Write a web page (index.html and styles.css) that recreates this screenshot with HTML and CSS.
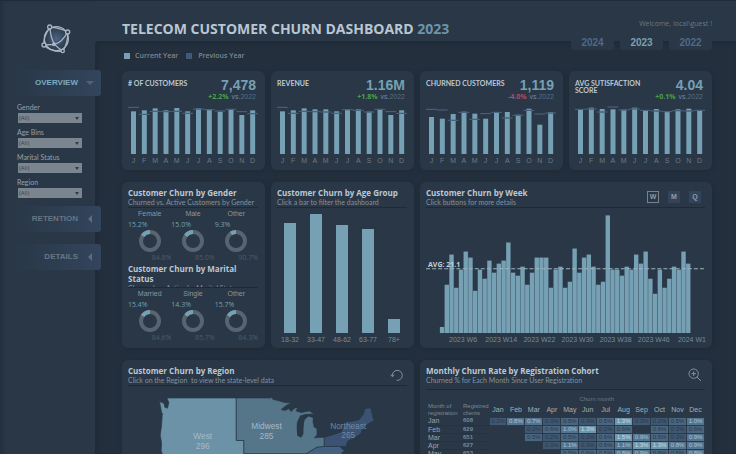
FILE: index.html
```html
<!DOCTYPE html>
<html lang="en">
<head>
<meta charset="utf-8">
<title>Telecom Customer Churn Dashboard</title>
<link rel="stylesheet" href="styles.css">
</head>
<body>
<div class="app">
  <aside class="sidebar">
    <svg class="logo" viewBox="120 62 96 99" aria-hidden="true">
      <defs><radialGradient id="globe"><stop offset="0" stop-color="#4b6282"/><stop offset="1" stop-color="#2a3949"/></radialGradient></defs>
      <circle cx="169" cy="112" r="36" fill="url(#globe)"/>
      <g fill="none" stroke="#a9b5c1" stroke-width="4">
        <circle cx="169" cy="112" r="36"/>
        <path d="M150 78Q151 110 164 129Q174 140 186 148M203 92Q186 124 164 129L132 131M150 78Q178 78 203 92Q205 124 188 150Q150 152 132 131Q129 106 150 78"/>
      </g>
      <g fill="#2a3949" stroke="#a9b5c1" stroke-width="4"><circle cx="149" cy="77" r="6"/><circle cx="203" cy="92" r="6"/><circle cx="132" cy="131" r="6"/><circle cx="188" cy="149" r="5"/></g>
      <circle cx="162" cy="129" r="6" fill="#a9b5c1"/>
    </svg>
    <nav class="menu">
      <button class="tab tab-active">OVERVIEW<svg viewBox="0 0 8 8"><path d="M0 2h8L4 6z"/></svg></button>
      <div class="filters">
        <label for="gender">Gender</label>
        <div class="pick"><select id="gender"><option>(All)</option></select></div>
        <label for="age">Age Bins</label>
        <div class="pick"><select id="age"><option>(All)</option></select></div>
        <label for="marital">Marital Status</label>
        <div class="pick"><select id="marital"><option>(All)</option></select></div>
        <label for="region">Region</label>
        <div class="pick"><select id="region"><option>(All)</option></select></div>
      </div>
      <button class="tab">RETENTION<svg viewBox="0 0 8 8"><path d="M6 0v8L2 4z"/></svg></button>
      <button class="tab">DETAILS<svg viewBox="0 0 8 8"><path d="M6 0v8L2 4z"/></svg></button>
    </nav>
  </aside>

  <div class="page">
    <header class="topbar">
      <h1>TELECOM CUSTOMER CHURN DASHBOARD <span>2023</span></h1>
      <div class="account">
        <p>Welcome, local\guest !</p>
        <nav class="years"><a href="#y2024">2024</a><a href="#y2023" class="current">2023</a><a href="#y2022">2022</a></nav>
      </div>
    </header>

    <main>
      <div class="legend"><span class="key">Current Year</span><span class="key key-prev">Previous Year</span></div>
      <div class="grid">
        <section class="card kpi">
          <div class="kpi-head"><h2># OF CUSTOMERS</h2><div class="figures"><strong>7,478</strong><p><b class="up">+2.2%</b> vs.<span>2022</span></p></div></div>
          <div class="months" data-kpi="customers"></div>
        </section>
        <section class="card kpi">
          <div class="kpi-head"><h2>REVENUE</h2><div class="figures"><strong>1.16M</strong><p><b class="up">+1.8%</b> vs.<span>2022</span></p></div></div>
          <div class="months" data-kpi="revenue"></div>
        </section>
        <section class="card kpi">
          <div class="kpi-head"><h2>CHURNED CUSTOMERS</h2><div class="figures"><strong>1,119</strong><p><b class="down">-4.0%</b> vs.<span>2022</span></p></div></div>
          <div class="months" data-kpi="churned"></div>
        </section>
        <section class="card kpi">
          <div class="kpi-head"><h2>AVG SUTISFACTION SCORE</h2><div class="figures"><strong>4.04</strong><p><b class="up">+0.1%</b> vs.<span>2022</span></p></div></div>
          <div class="months" data-kpi="score"></div>
        </section>

        <section class="card">
          <div class="head"><h2>Customer Churn by Gender</h2><p>Churned vs. Active Customers by Gender</p></div>
          <div class="donuts" data-donuts="gender"></div>
          <div class="head head-clipped"><h2>Customer Churn by Marital Status</h2><p>Churned vs. Active by Marital Status</p></div>
          <div class="donuts" data-donuts="marital"></div>
        </section>

        <section class="card">
          <div class="head"><h2>Customer Churn by Age Group</h2><p>Click a bar to filter the dashboard</p></div>
          <div class="ages" id="ages"></div>
        </section>

        <section class="card wide">
          <div class="head head-row">
            <div><h2>Customer Churn by Week</h2><p>Click buttons for more details</p></div>
            <div class="periods"><button class="on">W</button><button>M</button><button>Q</button></div>
          </div>
          <div class="weeks">
            <svg id="weeks" viewBox="0 0 825 375" preserveAspectRatio="none"></svg>
            <span class="avg">AVG: 21.1</span>
          </div>
          <div class="week-axis"><span>2023 W6</span><span>2023 W14</span><span>2023 W22</span><span>2023 W30</span><span>2023 W38</span><span>2023 W46</span><span>2024 W1</span></div>
        </section>

        <section class="card wide">
          <div class="head head-row">
            <div><h2>Customer Churn by Region</h2><p>Click on the Region&nbsp; to view the state-level data</p></div>
            <button class="icon" aria-label="Reset"><svg viewBox="0 0 42 42"><path d="M7 24A15 15 0 1 1 20 37M2 20L7 26L13 21"/></svg></button>
          </div>
          <svg class="map" viewBox="39 96 840 330">
            <path class="south" d="M388 300H575L608 280L630 278H676L690 290L680 302L700 330L640 400L650 426H560L400 420z"/>
            <path class="west" d="M134 143L147 148L150 160L158 163L162 146L156 132H365V260H388V420H200L150 330L139 290L140 267L136 245L140 215L142 182L144 180L140 176z"/>
            <path class="midwest" d="M365 132H470L471 127L475 136L490 140L512 146L530 147L515 155L500 167L512 170L523 164L530 173L541 162L550 162L545 171L560 176L585 171L600 180L575 182L558 186L549 205L548 225L550 245L560 250L566 240L564 215L570 198L582 186L596 190L606 205L598 218L608 225V243L600 252L630 250V278L608 280L575 300H388V260H365z"/>
            <path class="northeast" d="M630 250L650 245L682 234L688 218L698 205L735 198L748 180L752 165L758 163L770 162L776 190L780 200L765 208L745 222L740 240L720 252L700 262L695 278H630z"/>
            <path class="lake" d="M558 186L575 180L600 181L606 188L607 205L600 220L595 205L596 192L582 186L570 194L566 240L560 250L550 246L548 215z"/>
            <g class="map-text"><text x="264" y="255">West</text><text x="264" y="285">296</text><text x="456" y="227">Midwest</text><text x="456" y="257">285</text><g class="dim"><text x="702" y="225">Northeast</text><text x="702" y="254">265</text></g></g>
          </svg>
        </section>

        <section class="card wide">
          <div class="head head-row head-cohort">
            <div><h2>Monthly Churn Rate by Registration Cohort</h2><p>Churned % for Each Month Since User Registration</p></div>
            <button class="icon" aria-label="Zoom"><svg viewBox="0 0 42 42"><circle cx="17" cy="17" r="14"/><path d="M27 27L39 39M10 17H24M17 10V24"/></svg></button>
          </div>
          <table class="cohort">
            <colgroup><col class="col-month"><col class="col-clients"><col span="12"></colgroup>
            <thead>
              <tr class="over"><td colspan="2"></td><th colspan="12">Churn month</th></tr>
              <tr id="cohort-months"><th class="dim">Month of registration</th><th class="dim">Registred clients</th></tr>
            </thead>
            <tbody id="cohort-rows"></tbody>
          </table>
        </section>
      </div>
    </main>
  </div>
</div>
<script src="charts.js"></script>
</body>
</html>
```
FILE: styles.css
```css
* { box-sizing: border-box; }
body {
  margin: 0;
  font: 7px/9px "Open Sans", "Noto Sans", sans-serif;
  color: #7d8995;
  background: #232f3d;
}
h1, h2, p { margin: 0; font-size: inherit; }
button { font: inherit; color: inherit; border: 0; padding: 0; background: none; }
svg { display: block; }

.app {
  display: grid;
  grid-template-columns: 95px 1fr;
  height: 100vh;
  overflow: hidden;
  background: #293746;
  border-top: 1px solid #202b38;
}

/* Sidebar */
.sidebar { padding-top: 21px; box-shadow: inset 3px 0 3px #243140; }
.logo { width: 32px; height: 33px; margin: 0 auto 15px 40px; }
.menu { display: flex; flex-direction: column; position: relative; z-index: 1; }
.tab {
  display: flex;
  justify-content: flex-end;
  align-items: center;
  gap: 8px;
  height: 26px;
  margin: 0 -6px 12px 12px;
  padding-right: 7px;
  border-radius: 3px;
  background: linear-gradient(90deg, #293746, #33455d);
  font: bold 8px/10px "Liberation Sans", sans-serif;
  color: #667686;
}
.tab svg { width: 8px; height: 8px; fill: #5b6c85; }
.tab-active { margin-bottom: 6px; color: #7cabc0; }
.tab-active svg { fill: #50627b; }

.filters { display: flex; flex-direction: column; padding: 0 13px 4px 17px; }
.filters label { height: 11px; font: 7px/11px Lato, "Open Sans", sans-serif; color: #95a1ac; }
.pick { position: relative; margin: 0 0 4px 1px; height: 10px; }
.pick select {
  appearance: none;
  display: block;
  width: 100%;
  height: 10px;
  padding: 0 0 0 1px;
  border: 0;
  border-radius: 0;
  background: #7b858f;
  color: #384350;
  font: 6px/10px "Open Sans", sans-serif;
}
.pick::after {
  content: "";
  position: absolute;
  right: 3px;
  top: 4px;
  border: 2px solid transparent;
  border-top: 3px solid #313c48;
}

/* Header */
.page { display: flex; flex-direction: column; min-width: 0; }
.topbar {
  display: flex;
  justify-content: space-between;
  height: 40px;
  padding: 0 24px 0 27px;
  background: #293746;
}
h1 { padding-top: 18px; font-size: 14px; font-weight: bold; line-height: 20px; color: #b9c6d2; white-space: nowrap; }
h1 span { color: #6e94a9; }
.account { display: flex; flex-direction: column; align-items: flex-end; padding-top: 18px; }
.account p { color: #6d7882; }
.years { display: flex; gap: 6px; margin-top: 7px; position: relative; }
.years a {
  width: 43px;
  height: 15px;
  border-radius: 0 0 3px 3px;
  background: #293746;
  font: bold 10px/15px "Liberation Sans", sans-serif;
  text-align: center;
  text-decoration: none;
  color: #4f698c;
}
.years .current { color: #7c9fb2; }

/* Main area */
main {
  flex: 1;
  padding: 9px 24px 0 27px;
  border-radius: 4px 0 0 0;
  background: #232f3d;
  box-shadow: inset 2px 2px 4px #1f2a37;
}
.legend { display: flex; gap: 8px; height: 12px; margin: 0 0 9px 2px; font-weight: 600; line-height: 12px; color: #7a8996; }
.key { display: flex; align-items: center; gap: 5px; }
.key::before { content: ""; width: 6px; height: 6px; background: #76a0b4; }
.key-prev::before { background: #40597a; }
.key-prev { gap: 6px; }

.grid { display: grid; grid-template-columns: repeat(4, 1fr); gap: 12px 6px; }
.card {
  min-width: 0;
  padding: 6px 7px 4px 6px;
  border-radius: 6px;
  background: #293746;
  box-shadow: 1px 1px 4px #1f2a37;
}
.wide { grid-column: span 2; }

/* KPI cards */
.kpi { height: 99px; }
.kpi-head { display: flex; justify-content: space-between; height: 29px; }
.kpi-head h2 { padding-top: 3px; font: bold 7px/7px Lato, "Open Sans", sans-serif; color: #bcc8d3; }
.figures { text-align: right; padding-right: 2px; white-space: nowrap; }
.figures strong { display: block; font: bold 14px/16px "Liberation Sans", sans-serif; color: #76a0b4; }
.figures p { color: #7389a0; line-height: 8px; font-family: "Liberation Sans", sans-serif; }
.figures p span { color: #566d87; }
.figures b { margin-right: 1px; font-family: "Open Sans", sans-serif; }
.up { color: #4aa548; }
.down { color: #b84a66; }
.months svg { width: 100%; height: 48px; }
.labels { display: flex; padding-top: 2px; }
.labels span { flex: 1; text-align: center; font: 7px/9px "Liberation Sans", sans-serif; color: #6f7a85; }
.bar { fill: #76a0b4; }
.prev { stroke: #4e6685; stroke-width: 3; }
.prev-over { stroke: #45617a; stroke-width: 3; }

/* Card headings */
.head { height: 20px; border-bottom: 1px solid #1f2a37; }
.head h2 { font-size: 8px; line-height: 10px; color: #bcc8d3; }
.head p { font: 7px/8px Lato, "Open Sans", sans-serif; white-space: nowrap; color: #84919e; }
.head-row { display: flex; justify-content: space-between; }
.head-clipped { height: 24px; overflow: hidden; }
.head-cohort { height: 24px; }

/* Donuts */
.donuts { display: grid; grid-template-columns: repeat(3, 1fr); height: 56px; padding-top: 2px; }
.donuts figure { display: flex; flex-direction: column; margin: 0; }
.donuts figcaption { text-align: center; line-height: 8px; color: #8a96a2; font-family: "Liberation Sans", sans-serif; }
.donuts .pct { line-height: 9px; padding-top: 2px; color: #76a0b4; }
.donuts .rest { text-align: right; line-height: 9px; color: #4f5c68; }
.donuts svg { width: 22px; height: 22px; margin: 1px auto; }
.donuts circle { fill: none; stroke: #586570; stroke-width: 4; }
.donuts .slice { stroke: #76a0b4; }

/* Age bars */
.ages { display: flex; padding-top: 5px; }
.age { flex: 1; display: flex; flex-direction: column; align-items: center; }
.track { display: flex; align-items: flex-end; width: 44%; height: 120px; }
.fill { width: 100%; background: #76a0b4; }
.age span { padding-top: 2px; line-height: 9px; white-space: nowrap; color: #7d8995; font-family: "Liberation Sans", sans-serif; }

/* Weekly chart */
.weeks { position: relative; }
.weeks svg { width: 100%; height: 125px; }
.avg { position: absolute; left: 2px; top: 52px; font-weight: bold; color: #c3ced8; }
.avg-line { stroke: #9fb3c0; stroke-width: 3; stroke-dasharray: 12 6; }
.week-axis { display: flex; margin: 2px -6px 0 18px; font-family: "Liberation Sans", sans-serif; }
.week-axis span { flex: 1; text-align: center; white-space: nowrap; }
.periods { display: flex; gap: 9px; padding: 3px 4px 0 0; }
.periods button { width: 12px; height: 12px; background: #33445a; font: bold 7px/10px "Liberation Sans", sans-serif; color: #8d9dab; }
.periods .on { border: 1px solid #76838f; background: none; }

/* Map */
.icon { width: 14px; height: 14px; margin: 2px 3px 0 0; }
.icon svg { width: 14px; height: 14px; fill: none; stroke: #8292a1; stroke-width: 3; }
.map { width: 100%; }
.west { fill: #6b92a6; }
.midwest { fill: #557589; }
.northeast { fill: #3b5272; }
.south { fill: #466080; }
.lake { fill: #293746; }
.west, .midwest, .northeast, .south { stroke: #26384a; stroke-width: 2; }
.map-text { font: 25px "Liberation Sans", sans-serif; text-anchor: middle; fill: #a7bac6; }
.map-text .dim { fill: #7289a5; }

/* Cohort table */
.cohort { width: 100%; table-layout: fixed; border-collapse: collapse; font: 6px/8px "Liberation Sans", sans-serif; }
.col-month { width: 35px; }
.col-clients { width: 28px; }
.cohort td, .cohort th { padding: 0; font-weight: normal; text-align: center; }
.cohort .over th { padding-top: 5px; height: 13px; color: #6d7985; }
.cohort .month { font-size: 7px; color: #a3afba; vertical-align: middle; }
.cohort .dim { height: 14px; padding-left: 2px; text-align: left; line-height: 7px; color: #7d8995; }
.cohort tbody th, .cohort .clients { height: 8px; padding-left: 2px; text-align: left; font-size: 7px; line-height: 7px; color: #98a5b1; border-bottom: 1px solid #253240; }
.cohort .clients { font-size: 6px; font-weight: bold; color: #76899a; }
.cohort .rate { border: 1px solid #2a3a4a; line-height: 7px; color: #283849; }
.cohort .c1 { background: #3f5771; }
.cohort .c2 { background: #4a6680; }
.cohort .c3 { background: #547590; color: #b3c3ce; }
.cohort .c4 { background: #6d97ac; color: #d0dce3; }
```
FILE: charts.js
```js
const MONTHS = ["Jan", "Feb", "Mar", "Apr", "May", "Jun", "Jul", "Aug", "Sep", "Oct", "Nov", "Dec"];

// Monthly values for this year and the one before it, on a 0-144 scale.
const KPIS = {
  customers: [[128,131,137,131,138,128,137,135,127,135,117,131], [140,119,128,127,128,122,135,133,129,134,127,121]],
  revenue: [[128,131,137,134,134,128,135,134,127,135,117,131], [140,122,128,127,126,122,133,131,126,134,127,122]],
  churned: [[111,106,120,127,121,106,125,126,118,136,88,126], [134,132,101,125,104,121,125,108,116,131,120,123]],
  score: [[133,139,135,134,133,139,130,135,128,134,136,132], [134,135,126,141,132,135,131,129,127,130,129,131]]
};
for (const el of document.querySelectorAll("[data-kpi]")) {
  const [now, before] = KPIS[el.dataset.kpi];
  let shapes = "";
  now.forEach((v, i) => {
    const x = i * 32.5;
    const y = 144 - before[i];
    shapes += `<rect class="bar" x="${x + 9}" y="${144 - v}" width="15" height="${v}"/>`;
    shapes += `<path class="prev" d="M${x} ${y}h32.5"/>`;
    if (before[i] < v) shapes += `<path class="prev-over" d="M${x + 9} ${y}h15"/>`;
  });
  el.innerHTML = `<svg viewBox="0 0 390 144" preserveAspectRatio="none">${shapes}</svg>
    <div class="labels">${MONTHS.map(m => `<span>${m[0]}</span>`).join("")}</div>`;
}

const DONUTS = {
  gender: [["Female", 15.2], ["Male", 15.0], ["Other", 9.3]],
  marital: [["Married", 15.4], ["Single", 14.3], ["Other", 15.7]]
};
for (const el of document.querySelectorAll("[data-donuts]")) {
  el.innerHTML = DONUTS[el.dataset.donuts].map(([name, pct]) => `<figure>
    <figcaption>${name}</figcaption><span class="pct">${pct.toFixed(1)}%</span>
    <svg viewBox="0 0 22 22"><circle cx="11" cy="11" r="9"/>
    <circle class="slice" cx="11" cy="11" r="9" pathLength="100" stroke-dasharray="${pct} 100" transform="rotate(${-90 - pct * 3.6} 11 11)"/></svg>
    <span class="rest">${(100 - pct).toFixed(1)}%</span></figure>`).join("");
}

const AGES = [["18-32", 92], ["33-47", 99], ["48-62", 90], ["63-77", 87], ["78+", 12]];
document.getElementById("ages").innerHTML = AGES.map(([name, v]) =>
  `<div class="age"><div class="track"><div class="fill" style="height:${v}%"></div></div><span>${name}</span></div>`).join("");

const WEEKS = [2,16,26,15,21,27,25,14,21,18,24,20,23,24,30,20,19,22,16,20,25,25,25,15,21,22,15,17,28,20,25,26,22,16,17,39,21,21,19,22,21,26,23,27,18,13,21,15,18,22,21,27,23];
document.getElementById("weeks").innerHTML = WEEKS.map((v, i) =>
  `<rect class="bar" x="${41 + i * 14}" y="${375 - v * 9.05}" width="13" height="${v * 9.05}"/>`).join("") +
  `<path class="avg-line" d="M0 182H825"/>`;

const COHORTS = [
  ["Jan", 608, [0.2,0.8,0.7,0.3,0.5,0.3,0.5,1.3,0.3,0.2,0.5,1.0]],
  ["Feb", 629, [,,0.2,0.6,1.0,1.3,0.2,0.6,,0.6,0.3,0.6]],
  ["Mar", 651, [,,0.5,0.2,0.5,0.2,0.6,1.5,0.9,0.5,0.3,0.9]],
  ["Apr", 627, [,,,0.3,1.1,0.3,0.6,1.1,1.3,1.3,0.8,0.9]],
  ["May", 653, [,,,,0.5,0.6,0.5,0.8,0.9,0.6,0.5,0.8]]
];
const shade = v => v >= 1.3 ? "c4" : v >= 0.7 ? "c3" : v >= 0.5 ? "c2" : "c1";
document.getElementById("cohort-months").insertAdjacentHTML("beforeend",
  MONTHS.map(m => `<th class="month">${m}</th>`).join(""));
document.getElementById("cohort-rows").innerHTML = COHORTS.map(([month, clients, rates]) =>
  `<tr><th>${month}</th><td class="clients">${clients}</td>` +
  Array.from(rates, v => v === undefined ? "<td></td>" : `<td class="rate ${shade(v)}">${v.toFixed(1)}%</td>`).join("") +
  "</tr>").join("");
```
